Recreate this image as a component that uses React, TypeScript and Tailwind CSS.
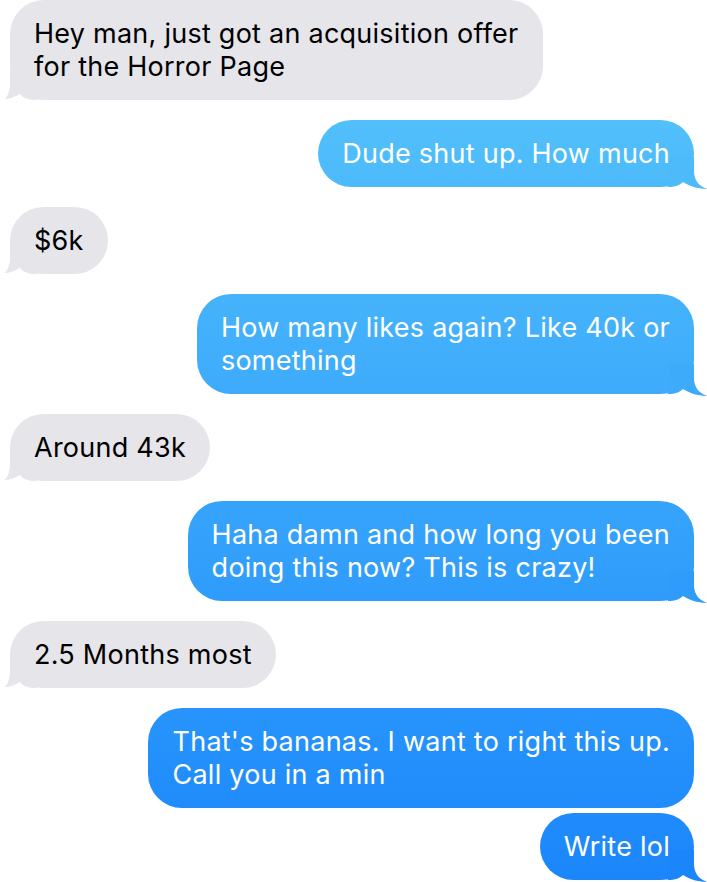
import React from "react";

type Msg = { me: boolean; lines: string[]; tail: boolean; y?: number; tight?: boolean };

const msgs: Msg[] = [
  { me: false, lines: ["Hey man, just got an acquisition offer", "for the Horror Page"], tail: true },
  { me: true, lines: ["Dude shut up. How much"], tail: true, y: 187 },
  { me: false, lines: ["$6k"], tail: true },
  { me: true, lines: ["How many likes again? Like 40k or", "something"], tail: true, y: 394 },
  { me: false, lines: ["Around 43k"], tail: true },
  { me: true, lines: ["Haha damn and how long you been", "doing this now? This is crazy!"], tail: true, y: 601 },
  { me: false, lines: ["2.5 Months most"], tail: true },
  { me: true, lines: ["That's bananas. I want to right this up.", "Call you in a min"], tail: false, y: 808 },
  { me: true, lines: ["Write lol"], tail: true, y: 880, tight: true },
];

const C0 = [90, 200, 250];
const C1 = [27, 134, 251];
function colorAt(y: number) {
  const t = Math.min(1, Math.max(0, y / 882));
  const c = C0.map((v, i) => Math.round(v + (C1[i] - v) * t));
  return `rgb(${c[0]},${c[1]},${c[2]})`;
}

function RightTail({ fill }: { fill: string }) {
  return (
    <svg
      className="absolute -right-5 -bottom-2.5 overflow-visible"
      width="40"
      height="40"
      viewBox="-20 -30 40 40"
    >
      <path
        d="M -24 -30 L 0 -30 L 0 -14 C 1 -6 5 -1 13 2 C 6 2 -3 0 -11 -5 C -14 -2 -19 0 -26 0 Z"
        fill={fill}
      />
    </svg>
  );
}

function LeftTail() {
  return (
    <svg
      className="absolute -left-5 -bottom-2.5 overflow-visible"
      width="40"
      height="40"
      viewBox="-20 -30 40 40"
    >
      <path
        d="M 24 -30 L 0 -30 L 0 -14 C -1 -7 -3 -2 -6 -1 C -1 -1 5 -3 10 -6 C 13 -2 19 0 26 0 Z"
        fill="#e5e5ea"
      />
    </svg>
  );
}

function Bubble({ m }: { m: Msg }) {
  const text = m.lines.map((l, i) => (
    <React.Fragment key={i}>
      {i > 0 && <br />}
      {l}
    </React.Fragment>
  ));
  if (m.me) {
    return (
      <div className="flex justify-end">
        <div className="relative rounded-[34px] bg-fixed bg-linear-to-b from-[#5ac8fa] to-[#1b86fb] px-6 py-[17px] text-white whitespace-nowrap leading-[33px]">
          {m.tail && <RightTail fill={colorAt(m.y ?? 0)} />}
          <span className="relative">{text}</span>
        </div>
      </div>
    );
  }
  return (
    <div className="flex justify-start">
      <div className="relative rounded-[34px] bg-[#e5e5ea] px-6 py-[17px] text-black whitespace-nowrap leading-[33px]">
        {m.tail && <LeftTail />}
        <span className="relative">{text}</span>
      </div>
    </div>
  );
}

export default function App() {
  return (
    <div
      className="w-[707px] h-[882px] overflow-hidden bg-white pl-[10px] pr-[13px] flex flex-col text-[27px] tracking-[0.25px]"
      style={{ fontFamily: "Inter, 'Noto Sans', sans-serif" }}
    >
      {msgs.map((m, i) => (
        <div key={i} className={i === 0 ? "" : m.tight ? "mt-[5px]" : "mt-5"}>
          <Bubble m={m} />
        </div>
      ))}
    </div>
  );
}
